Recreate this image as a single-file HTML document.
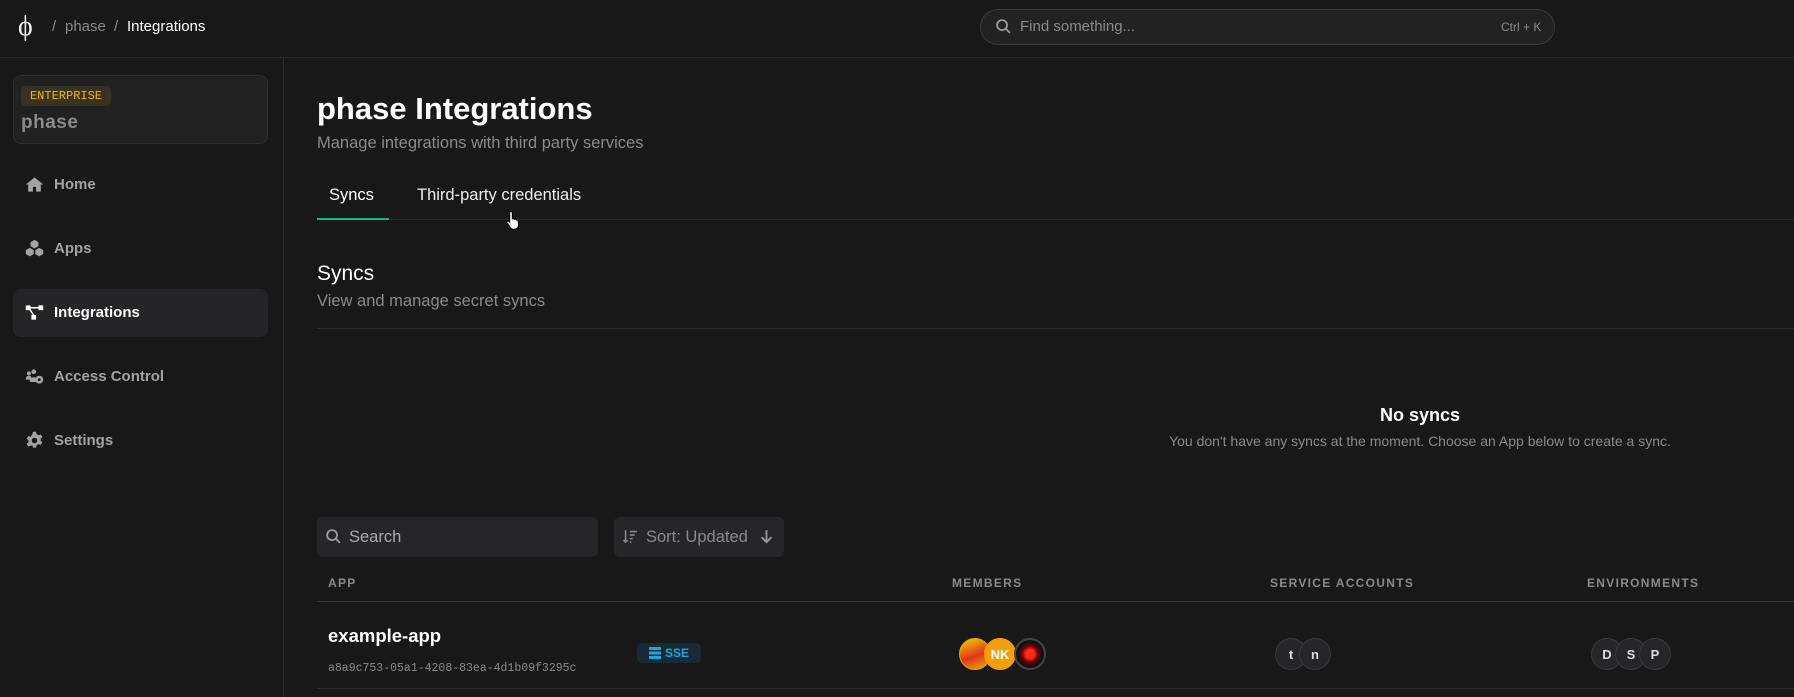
<!DOCTYPE html>
<html><head><meta charset="utf-8"><style>
*{box-sizing:border-box;margin:0;padding:0}
body{width:1794px;height:697px;background:#181818;font-family:"Liberation Sans",sans-serif;color:#e5e5e5;position:relative;overflow:hidden}
.a{position:absolute;white-space:nowrap}
.hdr{left:0;top:0;width:1794px;height:58px;border-bottom:1px solid #2c2c2c}
.side{left:0;top:58px;width:284px;height:639px;border-right:1px solid #2c2c2c}
.nav{left:25px;font-size:15px;font-weight:bold;color:#a3a3a3;display:flex;align-items:center;gap:10px}
.nav svg{width:19px;height:19px;fill:#a3a3a3}
.mut{color:#8a8a8a}
.th{font-size:12px;letter-spacing:1.3px;color:#8a8a8a;font-weight:bold}
.av{width:32px;height:32px;border-radius:50%;border:1px solid #3a3a3a;background:#262629;color:#ddd;font-size:13px;font-weight:bold;display:flex;align-items:center;justify-content:center;position:absolute}
</style></head><body>
<div class="a hdr"></div>
<div class="a" style="left:18px;top:11px;font-size:28px;color:#eee;font-family:'Liberation Serif',serif">ϕ</div>
<div class="a mut" style="left:52px;top:18px;font-size:15px">/</div>
<div class="a mut" style="left:65px;top:18px;font-size:15px">phase</div>
<div class="a mut" style="left:114px;top:18px;font-size:15px">/</div>
<div class="a" style="left:127px;top:18px;font-size:15px;color:#fff">Integrations</div>
<div class="a" style="left:980px;top:9px;width:575px;height:36px;border-radius:18px;border:1px solid #3a3a3a;background:#222"></div>
<svg class="a" style="left:995px;top:18px" width="17" height="17" viewBox="0 0 24 24" fill="none" stroke="#9a9a9a" stroke-width="2.6"><circle cx="10" cy="10" r="7"/><path d="M15 15l6 6"/></svg>
<div class="a mut" style="left:1020px;top:18px;font-size:15px">Find something...</div>
<div class="a mut" style="left:1501px;top:20px;font-size:12px">Ctrl + K</div>

<div class="a side"></div>
<div class="a" style="left:13px;top:75px;width:255px;height:69px;border-radius:8px;border:1px solid #2f2f2f;background:#212121"></div>
<div class="a" style="left:21px;top:86px;width:90px;height:20px;border-radius:5px;background:#3a3220;color:#f5b800;font-family:'Liberation Mono',monospace;font-size:12px;line-height:20px;text-align:center">ENTERPRISE</div>
<div class="a" style="left:21px;top:112px;font-size:19px;font-weight:bold;color:#8a8a8a;letter-spacing:.5px">phase</div>

<div class="a" style="left:13px;top:289px;width:255px;height:48px;border-radius:8px;background:#252527"></div>
<div class="a nav" style="top:175px"><svg viewBox="0 0 24 24"><path d="M12 3L1 12h3v9h6v-6h4v6h6v-9h3z"/></svg>Home</div>
<div class="a nav" style="top:239px"><svg viewBox="0 0 24 24"><path d="M12 1l5 3v5l-5 3-5-3V4zM6 11l5 3v5l-5 3-5-3v-5zM18 11l5 3v5l-5 3-5-3v-5z"/></svg>Apps</div>
<div class="a nav" style="top:303px;color:#fff"><svg viewBox="0 0 24 24" style="fill:#fff"><rect x="1" y="3" width="6" height="6"/><rect x="17" y="3" width="6" height="6"/><rect x="8" y="15" width="6" height="6"/><path d="M7 5h10v2H7zM5 8l5 8 1.6-1-5-8z" /></svg>Integrations</div>
<div class="a nav" style="top:367px"><svg viewBox="0 0 24 24"><circle cx="5" cy="8" r="2.5"/><circle cx="11" cy="6" r="3"/><path d="M1 15c0-3 2-4 4-4s3 1 3 2v3H1zM6 19c0-4 2-6 5-6s4 1 4 3v3z"/><circle cx="18" cy="16" r="5"/><circle cx="18" cy="16" r="1.8" fill="#181818"/></svg>Access Control</div>
<div class="a nav" style="top:431px"><svg viewBox="0 0 24 24"><path d="M10 1h4l.6 3 2.4 1.4 2.9-1 2 3.4-2.3 2a7 7 0 010 2.4l2.3 2-2 3.4-2.9-1-2.4 1.4-.6 3h-4l-.6-3L7 18.6l-2.9 1-2-3.4 2.3-2a7 7 0 010-2.4l-2.3-2 2-3.4 2.9 1L9.4 4z"/><circle cx="12" cy="12" r="3.5" fill="#181818"/></svg>Settings</div>

<div class="a" style="left:317px;top:91px;font-size:31px;font-weight:bold;color:#fff">phase Integrations</div>
<div class="a mut" style="left:317px;top:134px;font-size:16.5px">Manage integrations with third party services</div>
<div class="a" style="left:317px;top:219px;width:1477px;height:1px;background:#2e2e2e"></div>
<div class="a" style="left:317px;top:218px;width:72px;height:2px;background:#10b981"></div>
<div class="a" style="left:329px;top:186px;font-size:16.5px;color:#fff">Syncs</div>
<div class="a" style="left:417px;top:186px;font-size:16.5px;color:#eee">Third-party credentials</div>
<div class="a" style="left:317px;top:262px;font-size:21px;color:#fff">Syncs</div>
<div class="a mut" style="left:317px;top:292px;font-size:16.5px">View and manage secret syncs</div>
<div class="a" style="left:317px;top:328px;width:1477px;height:1px;background:#2e2e2e"></div>
<div class="a" style="left:1320px;top:405px;width:200px;text-align:center;font-size:18px;font-weight:bold;color:#fff">No syncs</div>
<div class="a mut" style="left:1020px;top:433px;width:800px;text-align:center;font-size:14px">You don't have any syncs at the moment. Choose an App below to create a sync.</div>

<div class="a" style="left:317px;top:517px;width:281px;height:40px;border-radius:6px;background:#262628"></div>
<svg class="a" style="left:325px;top:528px" width="17" height="17" viewBox="0 0 24 24" fill="none" stroke="#9a9a9a" stroke-width="2.6"><circle cx="10" cy="10" r="7"/><path d="M15 15l6 6"/></svg>
<div class="a" style="left:349px;top:528px;font-size:16.5px;color:#aaa">Search</div>
<div class="a" style="left:614px;top:517px;width:170px;height:40px;border-radius:6px;background:#262628"></div>
<svg class="a" style="left:622px;top:528px" width="17" height="17" viewBox="0 0 24 24" fill="none" stroke="#888" stroke-width="2.2"><path d="M5 3v17M2 17l3 3 3-3M11 5h10M11 10h7M11 15h4M11 20h2"/></svg>
<div class="a" style="left:646px;top:528px;font-size:16.5px;color:#8a8a8a">Sort: Updated</div>
<svg class="a" style="left:758px;top:528px" width="17" height="17" viewBox="0 0 24 24" fill="none" stroke="#999" stroke-width="2.6"><path d="M12 3v17M5 13l7 7 7-7"/></svg>

<div class="a th" style="left:328px;top:576px">APP</div>
<div class="a th" style="left:952px;top:576px">MEMBERS</div>
<div class="a th" style="left:1270px;top:576px">SERVICE ACCOUNTS</div>
<div class="a th" style="left:1587px;top:576px">ENVIRONMENTS</div>
<div class="a" style="left:317px;top:601px;width:1477px;height:1px;background:#333"></div>
<div class="a" style="left:328px;top:625px;font-size:18.5px;font-weight:bold;color:#fff">example-app</div>
<div class="a mut" style="left:328px;top:662px;font-family:'Liberation Mono',monospace;font-size:11.5px">a8a9c753-05a1-4208-83ea-4d1b09f3295c</div>
<div class="a" style="left:637px;top:643px;width:64px;height:20px;border-radius:5px;background:#182a36;color:#1fa6e0;font-size:12px;font-weight:bold;line-height:20px;padding-left:28px">SSE</div>
<svg class="a" style="left:649px;top:647px" width="12" height="12" viewBox="0 0 12 12" fill="#1fa6e0"><rect y="0" width="12" height="3"/><rect y="4.5" width="12" height="3"/><rect y="9" width="12" height="3"/></svg>
<div class="av" style="left:959px;top:638px;background:linear-gradient(160deg,#f5d300,#e2331f 55%,#e8b400);border-color:#d4b000"></div>
<div class="av" style="left:984px;top:638px;background:#f59e0b;border-color:#f59e0b;color:#fff">NK</div>
<div class="av" style="left:1014px;top:638px;background:radial-gradient(circle,#ff2a1a 0 22%,#700 40%,#111 60%);border:2px solid #444"></div>
<div class="av" style="left:1275px;top:638px">t</div>
<div class="av" style="left:1299px;top:638px">n</div>
<div class="av" style="left:1591px;top:638px">D</div>
<div class="av" style="left:1615px;top:638px">S</div>
<div class="av" style="left:1639px;top:638px">P</div>
<div class="a" style="left:317px;top:688px;width:1477px;height:1px;background:#2e2e2e"></div>
<svg class="a" style="left:506px;top:210px" width="16" height="20" viewBox="0 0 16 20"><path d="M5 1.5c.8 0 1.3.6 1.3 1.3V9l.6-.2c.7-.3 1.5 0 1.7.6.7-.3 1.5 0 1.8.6.7-.3 1.5 0 1.8.7l.3 4.5c0 2-1.5 4-3.8 4H7.3c-1.2 0-2.3-.7-3-1.7L1.2 13c-.4-.6-.2-1.4.4-1.7.6-.4 1.3-.2 1.7.3l.4.5V2.8C3.7 2.1 4.2 1.5 5 1.5z" fill="#fff" stroke="#000" stroke-width="1"/></svg>
</body></html>
